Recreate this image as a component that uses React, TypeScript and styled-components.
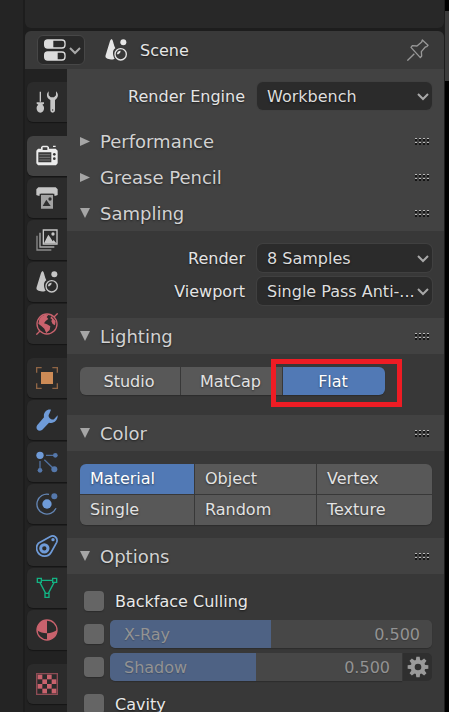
import React, { useState } from "react";
import type { ReactNode } from "react";
import styled, { createGlobalStyle } from "styled-components";

const GlobalStyle = createGlobalStyle`
  * { box-sizing: border-box; }
  body { margin: 0; background: #1e1e1e; }
  body, button, select, input, output {
    font-family: "DejaVu Sans", Verdana, sans-serif;
    font-size: 16px;
    line-height: 20px;
  }
  button, select { margin: 0; border: 0; }
  svg { display: block; }
`;

/* ---------- window frame ---------- */

const Window = styled.div`
  display: grid;
  grid-template-columns: 23px minmax(0, 1fr) 4px;
  column-gap: 1px;
  height: 100vh;
  overflow: hidden;
  background: #1d1d1d;
`;

const LeftStrip = styled.div`
  background: #242424;
`;

const Center = styled.div`
  display: flex;
  flex-direction: column;
  gap: 3px;
  min-width: 0;
  padding-left: 1px;
  overflow: hidden;
`;

const UpperArea = styled.div`
  flex: none;
  height: 28px;
  border-radius: 0 0 6px 6px;
  background: #282828;
`;

const ScrollTrack = styled.div`
  padding-top: 11px;
  background: #000;
`;

const ScrollThumb = styled.div`
  height: 70px;
  background: #3c3c3c;
`;

const Editor = styled.section`
  display: flex;
  flex-direction: column;
  flex: 1;
  min-height: 0;
  border-radius: 6px 6px 0 0;
  overflow: hidden;
  background: #222222;
`;

const EditorHeader = styled.header`
  display: flex;
  flex: none;
  align-items: center;
  height: 38px;
  padding: 0 15px 0 12px;
  background: #393939;
`;

const EditorType = styled.button`
  display: flex;
  align-items: center;
  gap: 3px;
  width: 48px;
  height: 30px;
  padding: 0 3px 0 6px;
  border: 1px solid #474747;
  border-radius: 6px;
  background: #292929;
  color: #a8a8a8;
`;

const Context = styled.div`
  display: flex;
  align-items: center;
  flex: 1;
  gap: 13px;
  margin-left: 20px;
  color: #e6e6e6;
  text-shadow: 0 1px 2px #00000099;
`;

const ContextName = styled.span`
  padding-top: 2px;
`;

const PinButton = styled.button`
  padding: 0;
  background: none;
  color: #989898;
`;

const EditorBody = styled.div`
  display: flex;
  flex: 1;
  min-height: 0;
`;

/* ---------- tabs ---------- */

const TabColumn = styled.nav`
  display: flex;
  flex-direction: column;
  flex: none;
  gap: 14px;
  width: 42px;
  padding: 13px 0 0 2px;
`;

const TabGroup = styled.div`
  display: flex;
  flex-direction: column;
  gap: 2px;
`;

const Tab = styled.button<{ $active: boolean; $tint: string }>`
  display: flex;
  align-items: center;
  justify-content: center;
  height: 40px;
  padding: 0;
  border-radius: 6px 0 0 6px;
  background: ${(p) => (p.$active ? "#424242" : "#2b2b2b")};
  box-shadow: 0 1px 1px #161616;
  color: ${(p) => p.$tint};
`;

/* ---------- panels ---------- */

const Properties = styled.main`
  flex: 1;
  min-width: 0;
  overflow: hidden;
  background: #424242;
`;

const EngineBlock = styled.div`
  padding: 13px 12px 13px 13px;
`;

const PanelTitle = styled.button`
  display: flex;
  align-items: center;
  gap: 10px;
  width: 100%;
  height: 36px;
  padding: 2px 14px 0 13px;
  background: #424242;
  color: #d2d2d2;
  font-size: 18px;
  text-align: left;
  text-shadow: 0 1px 2px #00000080;
`;

const TitleText = styled.span`
  flex: 1;
`;

const PanelBody = styled.div<{ $bottom?: number }>`
  display: flex;
  flex-direction: column;
  gap: 5px;
  padding: 13px 12px ${(p) => p.$bottom ?? 13}px 13px;
  background: #383838;
`;

const Field = styled.label`
  display: grid;
  grid-template-columns: minmax(0, 165fr) minmax(0, 175fr);
  align-items: center;
  gap: 12px;
  color: #e4e4e4;
  text-align: right;
  text-shadow: 0 1px 2px #00000099;
`;

const FieldName = styled.span`
  padding-top: 2px;
`;

const SelectBox = styled.span`
  display: grid;
  align-items: center;
  color: #a8a8a8;

  > * { grid-area: 1 / 1; }
  > svg { justify-self: end; margin-right: 3px; pointer-events: none; }
`;

const Select = styled.select`
  appearance: none;
  width: 100%;
  height: 28px;
  padding: 2px 16px 0 10px;
  border-radius: 6px;
  background: #2b2b2b;
  box-shadow: 0 0 0 1px #404040;
  color: #dddddd;
  text-shadow: 0 1px 2px #00000099;
  text-overflow: ellipsis;
`;

const Segments = styled.div<{ $columns: string; $row: number; $max?: number }>`
  display: grid;
  grid-template-columns: ${(p) => p.$columns};
  grid-auto-rows: ${(p) => p.$row}px;
  gap: 1px;
  width: 100%;
  max-width: ${(p) => (p.$max ? `${p.$max}px` : "none")};
  border-radius: 6px;
  box-shadow: 0 1px 1px #2d2d2d;
`;

const Segment = styled.button<{ $on: boolean; $centered?: boolean; $corners: string }>`
  position: relative;
  padding: ${(p) => (p.$centered ? "2px 12px 0 10px" : "0 10px")};
  border-radius: ${(p) => p.$corners};
  background: ${(p) => (p.$on ? "#5179b5" : "#585858")};
  color: ${(p) => (p.$on ? "#ffffff" : "#e2e2e2")};
  text-align: ${(p) => (p.$centered ? "center" : "left")};
  text-shadow: 0 1px 2px #00000080;
`;

const Callout = styled.span`
  position: absolute;
  inset: -8px -17px -12px -12px;
  border: 5px solid #ee1c24;
  pointer-events: none;
`;

/* ---------- options ---------- */

const OptionRow = styled.div<{ $spaced?: boolean }>`
  display: flex;
  align-items: center;
  gap: 6px;
  height: 28px;
  margin-top: ${(p) => (p.$spaced ? 4 : 0)}px;
  padding-left: 4px;
`;

const Check = styled.input`
  appearance: none;
  flex: none;
  width: 20px;
  height: 20px;
  margin: 0;
  border-radius: 4px;
  background: #656565;
  box-shadow: 0 1px 1px #2c2c2c;

  &:checked { background: #5179b5; }
`;

const CheckLabel = styled.label`
  display: flex;
  align-items: center;
  gap: 11px;
  color: #e8e8e8;
  text-shadow: 0 1px 2px #00000099;
`;

const CheckText = styled.span`
  padding-top: 2px;
`;

const SliderBox = styled.label<{ $joined?: boolean }>`
  display: grid;
  grid-template-columns: 1fr auto;
  align-items: center;
  flex: 1;
  min-width: 0;
  height: 28px;
  padding: 0 12px 0 14px;
  border-radius: ${(p) => (p.$joined ? "5px 0 0 5px" : "5px")};
  background: linear-gradient(to right, #4e6284 var(--fill), #474747 var(--fill));
  box-shadow: 0 1px 1px #2d2d2d;
  color: #939393;
  text-shadow: 0 1px 1px #00000033;
`;

const SliderInput = styled.input`
  appearance: none;
  grid-area: 1 / 1 / 2 / 3;
  width: 100%;
  height: 28px;
  margin: 0;
  opacity: 0;
`;

const SliderName = styled.span`
  grid-area: 1 / 1;
  padding-top: 2px;
`;

const SliderValue = styled.output`
  grid-area: 1 / 2;
  padding-top: 2px;
`;

const SliderGroup = styled.div`
  display: flex;
  flex: 1;
  gap: 1px;
`;

const GearButton = styled.button`
  display: flex;
  align-items: center;
  justify-content: center;
  width: 29px;
  height: 28px;
  padding: 0;
  border-radius: 0 5px 5px 0;
  background: #2f2f2f;
  color: #9a9a9a;
`;

/* ---------- icons ---------- */

const Icon = ({ children }: { children: ReactNode }) => (
  <svg width="22" height="22" viewBox="0 0 66 66" fill="none" stroke="none" aria-hidden="true">
    {children}
  </svg>
);

const Chevron = () => (
  <svg width="12" height="12" viewBox="0 0 12 12" fill="none" stroke="currentColor" strokeWidth="2" aria-hidden="true">
    <path d="M1 4l5 5 5-5" />
  </svg>
);

const Triangle = ({ open }: { open: boolean }) => (
  <svg width="10" height="12" viewBox="0 0 20 24" fill="#a6a6a6" aria-hidden="true">
    <path d={open ? "M0 0h20L10 20z" : "M0 2v18l20-9z"} />
  </svg>
);

const Grip = () => (
  <svg width="15" height="8" viewBox="0 0 15 8" aria-hidden="true" shapeRendering="crispEdges">
    {[0, 4, 8, 12].map((x) =>
      [0, 4].map((y) => (
        <g key={`${x}-${y}`}>
          <rect x={x} y={y + 1} width="2" height="2" fill="#141414" />
          <rect x={x} y={y} width="2" height="1" fill="#b8b8b8" />
        </g>
      )),
    )}
  </svg>
);

const PropertiesIcon = () => (
  <Icon>
    <rect x="2" y="3" width="61" height="24" rx="9" stroke="#dcdcdc" strokeWidth="4" />
    <path d="M11 3h17v24H11a9 9 0 0 1-9-9v-6a9 9 0 0 1 9-9z" fill="#dcdcdc" />
    <rect x="2" y="39" width="61" height="24" rx="9" stroke="#dcdcdc" strokeWidth="4" />
    <path d="M11 39h30v24H11a9 9 0 0 1-9-9v-6a9 9 0 0 1 9-9z" fill="#dcdcdc" />
  </Icon>
);

const SceneIcon = () => (
  <Icon>
    <path d="M20 0c4 3 5 12 8 21l3 7C22 32 22 48 29 59c-7 4-18 3-24-1-5-3-4-8-2-13L15 6c1-3 3-5 5-6z" fill="currentColor" />
    <circle cx="55" cy="10" r="9" fill="currentColor" />
    <circle cx="47" cy="46" r="17" stroke="currentColor" strokeWidth="4" />
    <path d="M36 46a11 11 0 0 1 11-11c0 6-5 11-11 11z" fill="currentColor" />
  </Icon>
);

const PinIcon = () => (
  <Icon>
    <path d="M1 65l21-21M46 3l17 16-4 4-4 1-12 14 1 13-4 5L12 25l4-5 14 1 14-12z" stroke="currentColor" strokeWidth="4" strokeLinejoin="round" />
  </Icon>
);

const ToolsIcon = () => (
  <Icon>
    <path d="M11 2h4v30h-4zM2 34h22v4l-5 3c9 6 6 24-6 24S-2 47 7 41l-5-3z" fill="currentColor" />
    <path d="M38 1v12l6 6h10l6-6V1c9 8 7 20-3 26v31a7 7 0 0 1-14 0V27C31 21 30 9 38 1z" fill="currentColor" />
    <circle cx="50" cy="57" r="2" fill="#2b2b2b" />
  </Icon>
);

const RenderIcon = () => (
  <Icon>
    <path fillRule="evenodd" d="M6 11h9V6l5-4h14l5 4v5h20l6 6v38l-5 6H6l-5-6V17zM20 7v8h14V7z" fill="currentColor" />
    <path d="M51 2h8v4h-8z" fill="currentColor" />
    <path d="M7 22h39v30H7z" fill="#3a3a3a" />
    <path d="M10 29h33M10 37h33M10 45h33" stroke="#777" strokeWidth="3" />
    <circle cx="55" cy="28" r="4" fill="#363636" />
    <circle cx="55" cy="41" r="4" fill="#363636" />
  </Icon>
);

const OutputIcon = () => (
  <Icon>
    <path d="M7 1h52l6 6v17l-6 2h-4v-6H11v6H7l-6-2V7z" fill="currentColor" />
    <path d="M15 24h36v41H15z" fill="#a2a2a2" />
    <path d="M15 20h36v4H15z" fill="#343434" />
    <path d="M20 57l11-19 13 19z" fill="#303030" />
    <circle cx="42" cy="36" r="5" fill="#303030" />
  </Icon>
);

const ViewLayerIcon = () => (
  <Icon>
    <path d="M22 3h41v42H22z" stroke="currentColor" strokeWidth="4" />
    <path d="M24 43l13-26 5 7 8 13 3-4 8 10z" fill="currentColor" />
    <circle cx="51" cy="15" r="5" fill="currentColor" />
    <path d="M12 11v43h43" stroke="#a9a9a9" strokeWidth="4" />
    <path d="M3 20v43h43" stroke="#8c8c8c" strokeWidth="4" />
  </Icon>
);

const WorldIcon = () => (
  <Icon>
    <circle cx="33" cy="33" r="30" stroke="currentColor" strokeWidth="4" />
    <path d="M54 12L65 1M12 54L1 65" stroke="currentColor" strokeWidth="4" />
    <path d="M10 19C15 9 26 4 37 6l-5 6 5 6-8 6-5 7 9 3 10 6-2 11-8 7-2 3-6-14-9-8-9-7z" fill="currentColor" />
    <path d="M46 10l13 15-2 12-7-4-4-8 2-6-5-3z" fill="currentColor" />
  </Icon>
);

const ObjectIcon = () => (
  <Icon>
    <path d="M15 15h36v36H15z" fill="currentColor" />
    <path d="M2 17V2h15M49 2h15v15M64 49v15H49M17 64H2V49" stroke="#8f6545" strokeWidth="4" />
  </Icon>
);

const ModifierIcon = () => (
  <Icon>
    <path d="M45 2c-11-3-24 7-21 23L4 48c-8 11 4 23 15 14l20-21c14 5 27-7 26-22L54 31c-5 2-11-1-14-5s-3-8 0-12z" fill="currentColor" />
  </Icon>
);

const ParticlesIcon = () => (
  <Icon>
    <path d="M30 13h26M12 30v27M25 26l29 28" stroke="#50709e" strokeWidth="4" />
    <circle cx="12" cy="13" r="11" fill="currentColor" />
    <circle cx="58" cy="13" r="7" fill="#5578ab" />
    <circle cx="12" cy="58" r="7" fill="#5578ab" />
    <circle cx="55" cy="55" r="9" fill="#5578ab" />
  </Icon>
);

const PhysicsIcon = () => (
  <Icon>
    <path d="M39 4A30 30 0 1 0 60 46" stroke="#6486b5" strokeWidth="4" />
    <circle cx="33" cy="33" r="14" fill="currentColor" />
    <circle cx="55" cy="10" r="9" fill="#5578ab" />
  </Icon>
);

const ConstraintIcon = () => (
  <Icon>
    <path d="M7 25L42 5c12-7 25 4 20 17L46 51C37 68 14 67 5 51 0 41 1 32 7 25z" stroke="currentColor" strokeWidth="5" />
    <circle cx="25" cy="40" r="11" stroke="currentColor" strokeWidth="9" />
    <circle cx="51" cy="14" r="5" fill="currentColor" />
  </Icon>
);

const MeshIcon = () => (
  <Icon>
    <path d="M16 10h34M12 17l17 32M54 17L37 49" stroke="currentColor" strokeWidth="4" />
    <path d="M4 4h12v12H4zM50 4h12v12H50zM27 49h12v12H27z" stroke="currentColor" strokeWidth="4" />
  </Icon>
);

const MaterialIcon = () => (
  <Icon>
    <circle cx="33" cy="33" r="30" stroke="currentColor" strokeWidth="4" />
    <path d="M33 3v40C21 42 11 40 3 34 3 16 16 3 33 3z" fill="currentColor" />
    <path d="M33 43c12-1 22-4 30-10 0 17-13 30-30 30z" fill="currentColor" />
  </Icon>
);

const TextureIcon = () => (
  <Icon>
    <path d="M2 2h62v62H2z" stroke="#8e4c55" strokeWidth="4" />
    {[0, 1, 2, 3].map((row) =>
      [0, 1, 2, 3]
        .filter((col) => (row + col) % 2 === 0)
        .map((col) => (
          <rect key={`${row}-${col}`} x={5 + col * 14} y={5 + row * 14} width="14" height="14" fill="currentColor" />
        )),
    )}
  </Icon>
);

const GearIcon = () => (
  <Icon>
    {[0, 45, 90, 135].map((angle) => (
      <path key={angle} d="M28 2h10l2 14H26zM28 64h10l2-14H26z" fill="currentColor" transform={`rotate(${angle} 33 33)`} />
    ))}
    <circle cx="33" cy="33" r="16" stroke="currentColor" strokeWidth="12" />
  </Icon>
);

/* ---------- data ---------- */

const GRAY = "#c6c6c6";
const BLUE = "#6f9bd8";
const RED = "#c9626d";

const tabGroups = [
  [{ name: "Tool", tint: GRAY, icon: <ToolsIcon /> }],
  [
    { name: "Render", tint: "#ececec", icon: <RenderIcon /> },
    { name: "Output", tint: GRAY, icon: <OutputIcon /> },
    { name: "View Layer", tint: GRAY, icon: <ViewLayerIcon /> },
    { name: "Scene", tint: GRAY, icon: <SceneIcon /> },
    { name: "World", tint: RED, icon: <WorldIcon /> },
  ],
  [
    { name: "Object", tint: "#cd8b56", icon: <ObjectIcon /> },
    { name: "Modifiers", tint: BLUE, icon: <ModifierIcon /> },
    { name: "Particles", tint: BLUE, icon: <ParticlesIcon /> },
    { name: "Physics", tint: BLUE, icon: <PhysicsIcon /> },
    { name: "Constraints", tint: BLUE, icon: <ConstraintIcon /> },
    { name: "Object Data", tint: "#13b383", icon: <MeshIcon /> },
    { name: "Material", tint: RED, icon: <MaterialIcon /> },
  ],
  [{ name: "Texture", tint: RED, icon: <TextureIcon /> }],
];

const lightingModes = ["Studio", "MatCap", "Flat"];
const lightingCorners = ["6px 0 0 6px", "0", "0 6px 6px 0"];
const colorModes = ["Material", "Object", "Vertex", "Single", "Random", "Texture"];
const colorCorners = ["6px 0 0 0", "0", "0 6px 0 0", "0 0 0 6px", "0", "0 0 6px 0"];

/* ---------- composed parts ---------- */

const Panel = ({ title, startOpen = true, bottom, children }: {
  title: string;
  startOpen?: boolean;
  bottom?: number;
  children?: ReactNode;
}) => {
  const [open, setOpen] = useState(startOpen);
  return (
    <section>
      <PanelTitle aria-expanded={open} onClick={() => setOpen(!open)}>
        <Triangle open={open} />
        <TitleText>{title}</TitleText>
        <Grip />
      </PanelTitle>
      {open && children && <PanelBody $bottom={bottom}>{children}</PanelBody>}
    </section>
  );
};

const SelectField = ({ label, value }: { label: string; value: string }) => (
  <Field>
    <FieldName>{label}</FieldName>
    <SelectBox>
      <Select defaultValue={value}>
        <option>{value}</option>
      </Select>
      <Chevron />
    </SelectBox>
  </Field>
);

const CheckOption = ({ label }: { label: string }) => (
  <CheckLabel>
    <Check type="checkbox" />
    <CheckText>{label}</CheckText>
  </CheckLabel>
);

const Slider = ({ name, value, joined }: { name: string; value: number; joined?: boolean }) => (
  <SliderBox $joined={joined} style={{ "--fill": `${value * 100}%` } as React.CSSProperties}>
    <SliderName>{name}</SliderName>
    <SliderValue>{value.toFixed(3)}</SliderValue>
    <SliderInput type="range" min="0" max="1" step="0.001" defaultValue={value} disabled aria-label={name} />
  </SliderBox>
);

export default function App() {
  const [tab, setTab] = useState("Render");
  const [lighting, setLighting] = useState("Flat");
  const [color, setColor] = useState("Material");

  return (
    <Window>
      <GlobalStyle />
      <LeftStrip />
      <Center>
        <UpperArea />
        <Editor>
          <EditorHeader>
            <EditorType aria-label="Editor type">
              <PropertiesIcon />
              <Chevron />
            </EditorType>
            <Context>
              <SceneIcon />
              <ContextName>Scene</ContextName>
            </Context>
            <PinButton aria-label="Pin">
              <PinIcon />
            </PinButton>
          </EditorHeader>
          <EditorBody>
            <TabColumn>
              {tabGroups.map((group) => (
                <TabGroup key={group[0].name}>
                  {group.map((t) => (
                    <Tab key={t.name} aria-label={t.name} $active={t.name === tab} $tint={t.tint} onClick={() => setTab(t.name)}>
                      {t.icon}
                    </Tab>
                  ))}
                </TabGroup>
              ))}
            </TabColumn>
            <Properties>
              <EngineBlock>
                <SelectField label="Render Engine" value="Workbench" />
              </EngineBlock>
              <Panel title="Performance" startOpen={false} />
              <Panel title="Grease Pencil" startOpen={false} />
              <Panel title="Sampling">
                <SelectField label="Render" value="8 Samples" />
                <SelectField label="Viewport" value="Single Pass Anti-..." />
              </Panel>
              <Panel title="Lighting" bottom={20}>
                <Segments $columns="100fr 101fr 102fr" $row={28} $max={305}>
                  {lightingModes.map((mode, i) => (
                    <Segment
                      key={mode}
                      $on={mode === lighting}
                      $centered
                      $corners={lightingCorners[i]}
                      aria-pressed={mode === lighting}
                      onClick={() => setLighting(mode)}
                    >
                      {mode}
                      {mode === "Flat" && <Callout />}
                    </Segment>
                  ))}
                </Segments>
              </Panel>
              <Panel title="Color">
                <Segments $columns="114fr 121fr 115fr" $row={30}>
                  {colorModes.map((mode, i) => (
                    <Segment
                      key={mode}
                      $on={mode === color}
                      $corners={colorCorners[i]}
                      aria-pressed={mode === color}
                      onClick={() => setColor(mode)}
                    >
                      {mode}
                    </Segment>
                  ))}
                </Segments>
              </Panel>
              <Panel title="Options">
                <OptionRow>
                  <CheckOption label="Backface Culling" />
                </OptionRow>
                <OptionRow>
                  <Check type="checkbox" aria-label="Enable X-Ray" />
                  <Slider name="X-Ray" value={0.5} />
                </OptionRow>
                <OptionRow>
                  <Check type="checkbox" aria-label="Enable Shadow" />
                  <SliderGroup>
                    <Slider name="Shadow" value={0.5} joined />
                    <GearButton aria-label="Shadow settings">
                      <GearIcon />
                    </GearButton>
                  </SliderGroup>
                </OptionRow>
                <OptionRow $spaced>
                  <CheckOption label="Cavity" />
                </OptionRow>
              </Panel>
            </Properties>
          </EditorBody>
        </Editor>
      </Center>
      <ScrollTrack>
        <ScrollThumb />
      </ScrollTrack>
    </Window>
  );
}
